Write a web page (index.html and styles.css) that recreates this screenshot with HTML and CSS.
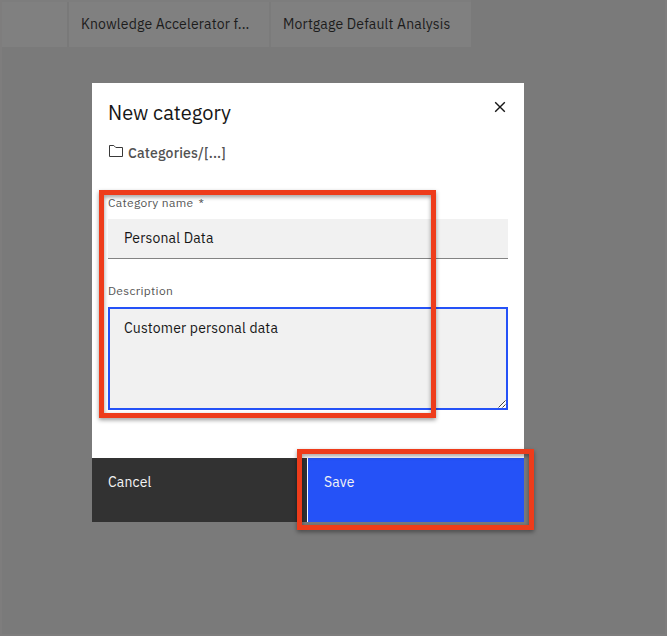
FILE: index.html
```
<!DOCTYPE html>
<html lang="en">
<head>
<meta charset="utf-8">
<title>New category</title>
<link rel="stylesheet" href="styles.css">
</head>
<body>
<div class="page">
  <nav class="tabs">
    <div class="tab tab-empty"></div>
    <div class="tab tab-knowledge">Knowledge Accelerator f...</div>
    <div class="tab tab-mortgage">Mortgage Default Analysis</div>
  </nav>
  <main class="modal">
    <header class="head">
      <h1 class="title">New category</h1>
      <svg class="close" width="12" height="12" viewBox="0 0 12 12"><path d="M1.2 1.2L10.8 10.8M10.8 1.2L1.2 10.8" fill="none" stroke="#161616" stroke-width="1.4"/></svg>
    </header>
    <div class="crumb">
      <svg width="16" height="14" viewBox="0 0 16 14"><path d="M1.5 1.5H5.8L7.8 3.5H14.5V12.5H1.5Z" fill="none" stroke="#393939" stroke-width="1"/></svg>
      <span>Categories/[...]</span>
    </div>
    <div class="label"><span>Category name</span><span class="star">*</span></div>
    <div class="input">Personal Data</div>
    <div class="label label-desc">Description</div>
    <div class="area">
      <span>Customer personal data</span>
      <svg class="grip" width="8" height="8" viewBox="0 0 8 8"><path d="M1 8L8 1M5 8L8 5" fill="none" stroke="#fff" stroke-width="2"/><path d="M0.5 7.5L7.5 0.5M4.5 7.5L7.5 4.5" fill="none" stroke="#444" stroke-width="1"/></svg>
    </div>
    <footer class="actions">
      <div class="btn cancel">Cancel</div>
      <div class="btn save">Save</div>
    </footer>
    <div class="mark mark-fields"></div>
    <div class="mark mark-save"></div>
  </main>
</div>
</body>
</html>
```
FILE: styles.css
```
* { box-sizing: border-box; }
body { margin: 0; font-family: "IBM Plex Sans", Roboto, sans-serif; font-size: 14px; letter-spacing: .16px; color: #161616; }
.page { width: 667px; height: 636px; background: #7a7a7a; border: 2px solid #7e7d7d; border-top-width: 0; overflow: hidden; }
.tabs { display: flex; height: 47px; width: 469px; border-top: 2px solid #7d7d7d; background: #808080; color: #1c1c1c; line-height: 44px; white-space: nowrap; }
.tab-empty { width: 65px; }
.tab-knowledge { width: 202px; padding-left: 12px; border-left: 2px solid #797979; }
.tab-mortgage { width: 202px; padding-left: 12px; border-left: 2px solid #7b7b7b; }
.modal { position: relative; display: flex; flex-direction: column; width: 432px; height: 439px; margin: 36px 0 0 90px; background: #fff; white-space: nowrap; }
.head { display: flex; justify-content: space-between; height: 60px; padding: 17px 18px 0 16px; }
.title { margin: 0; font-size: 20px; line-height: 26px; font-weight: 400; letter-spacing: 0; }
.close { margin-top: 1px; }
.crumb { display: flex; align-items: center; gap: 4px; height: 20px; padding-left: 16px; color: #525252; font-weight: 500; }
.crumb svg { margin-top: -4px; }
.label { display: flex; height: 16px; margin: 32px 16px 0; font-size: 12px; line-height: 16px; letter-spacing: .32px; color: #565656; }
.star { margin-left: 5px; }
.input { height: 40px; margin: 8px 16px 0; padding-left: 16px; line-height: 38px; background: #f1f1f1; border-bottom: 1px solid #838383; }
.label-desc { margin-top: 24px; }
.area { position: relative; height: 103px; margin: 8px 16px 0; padding: 9px 14px; line-height: 20px; background: #f1f1f1; border: 2px solid #2552f7; }
.grip { position: absolute; right: 0; bottom: 0; }
.actions { display: flex; height: 64px; margin-top: auto; color: #f4f4f4; line-height: 20px; }
.btn { padding: 14px 16px; }
.cancel { width: 215px; background: #323232; }
.save { flex: 1; background: #2552f7; border-left: 1px solid #fff; }
.mark { position: absolute; border: 5px solid #ee3c1b; filter: drop-shadow(0 2px 2px rgba(0,0,0,.4)); }
.mark-fields { left: 7px; top: 107px; width: 337px; height: 228px; }
.mark-save { left: 205px; top: 366px; width: 237px; height: 81px; }
```
